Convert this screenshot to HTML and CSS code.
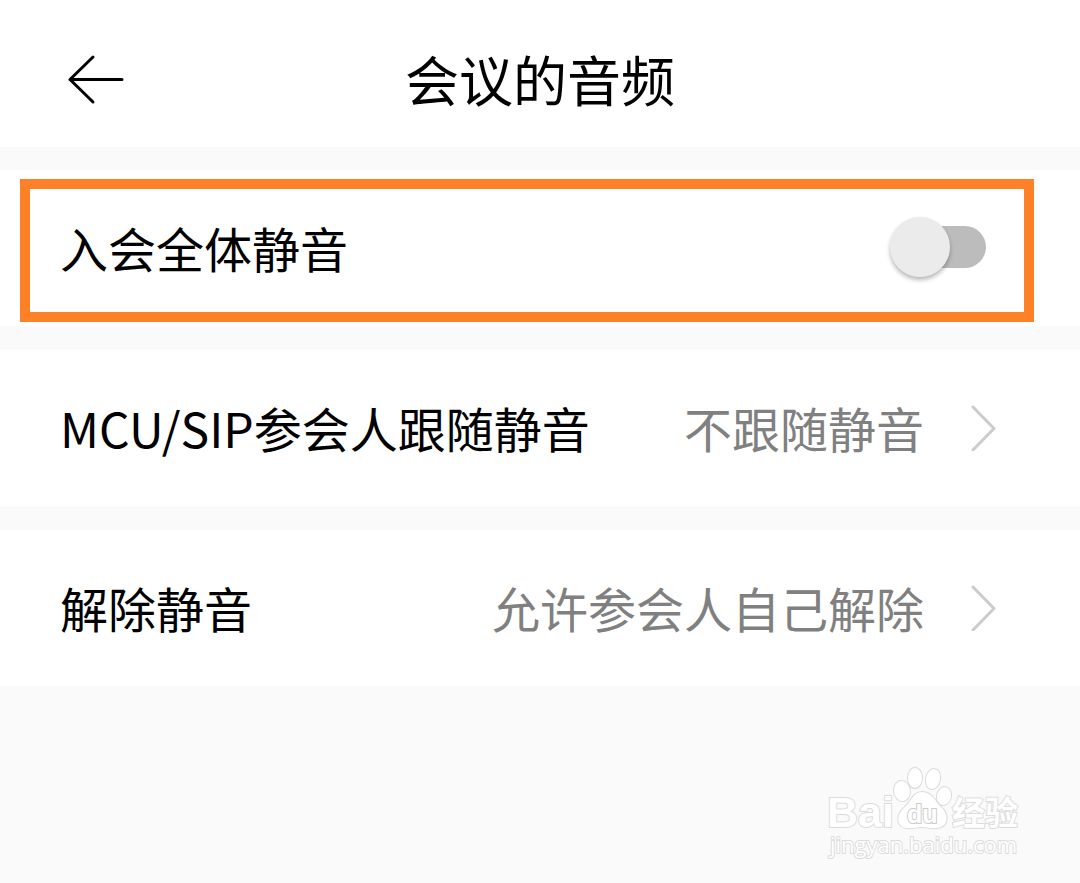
FILE: index.html
```html
<!DOCTYPE html>
<html lang="zh-CN">
<head>
<meta charset="utf-8">
<meta name="viewport" content="width=device-width, initial-scale=1">
<title>会议的音频</title>
<link rel="stylesheet" href="styles.css">
</head>
<body class="page">
<header class="header">
  <button class="back" type="button" aria-label="返回">
    <svg class="back-icon" width="60" height="52" viewBox="0 0 60 52" aria-hidden="true"><path d="M29 4 6 26.500 29 49M6 26.500H58"/></svg>
  </button>
  <h1 class="title">会议的音频</h1>
</header>
<main class="settings">
  <div class="row row-highlighted">
    <label class="label" for="mute-all">入会全体静音</label>
    <input class="switch" id="mute-all" type="checkbox" role="switch">
  </div>
  <button class="row" type="button">
    <span class="label">MCU/SIP参会人跟随静音</span>
    <span class="value">不跟随静音</span>
    <svg class="chevron" width="28" height="48" viewBox="0 0 28 48" aria-hidden="true"><path d="M3 4 24 25.500 3 47"/></svg>
  </button>
  <button class="row" type="button">
    <span class="label">解除静音</span>
    <span class="value">允许参会人自己解除</span>
    <svg class="chevron" width="28" height="48" viewBox="0 0 28 48" aria-hidden="true"><path d="M3 4 24 25.500 3 47"/></svg>
  </button>
</main>
<footer class="footer">
  <svg class="watermark" width="210" height="104" viewBox="0 0 210 104">
    <text class="mark mark-latin" x="7" y="68">Bai</text>
    <ellipse class="mark" cx="82" cy="32" rx="8" ry="10" transform="rotate(-8 82 32)"/>
    <ellipse class="mark" cx="95" cy="19" rx="7" ry="10"/>
    <ellipse class="mark" cx="113" cy="20" rx="7" ry="10" transform="rotate(12 113 20)"/>
    <ellipse class="mark" cx="124" cy="37" rx="7" ry="9" transform="rotate(12 124 37)"/>
    <path class="mark" d="M102 33C112 33 115 42 121 48C130 56 128 69 116 69C110 70 107 68 102 68C97 68 93 70 87 69C76 68 76 56 84 49C91 43 93 33 102 33Z"/>
    <text class="mark mark-du" x="87" y="64">du</text>
    <text class="mark mark-cjk" x="132" y="66">经验</text>
    <text class="mark mark-url" x="10" y="94">jingyan.baidu.com</text>
  </svg>
</footer>
</body>
</html>
```
FILE: styles.css
```css
* {
  box-sizing: border-box;
}

.page {
  display: flex;
  flex-direction: column;
  min-height: 100vh;
  margin: 0;
  background: #fafafa;
  color: #000;
  font-family: "Noto Sans CJK SC", sans-serif;
}

.header {
  display: grid;
  grid-template-columns: 64px 1fr 64px;
  align-items: center;
  padding: 39px 64px 28px;
  background: #fff;
}

.back {
  display: flex;
  padding: 0;
  border: 0;
  background: none;
}

.back-icon {
  fill: none;
  stroke: #000;
  stroke-width: 3;
  stroke-linecap: round;
  stroke-linejoin: round;
}

.title {
  margin: 0;
  font-size: 54px;
  font-weight: 400;
  line-height: 80px;
  text-align: center;
}

.settings {
  display: flex;
  flex-direction: column;
  gap: 24px;
  margin-top: 23px;
}

.row {
  position: relative;
  display: flex;
  align-items: center;
  width: 100%;
  padding: 41px 82px 43px 60px;
  border: 0;
  background: #fff;
  color: inherit;
  font: inherit;
  font-size: 48px;
  line-height: 72px;
  text-align: left;
}

.row-highlighted {
  padding-right: 94px;
}

.row-highlighted::after {
  content: "";
  position: absolute;
  inset: 9px 46px 4px 20px;
  border: 10px solid #ff8127;
  pointer-events: none;
}

.label {
  flex: 1;
}

.value {
  color: #808080;
}

.chevron {
  margin-left: 46px;
  fill: none;
  stroke: #ccc;
  stroke-width: 3;
  stroke-linecap: round;
  stroke-linejoin: round;
}

.switch {
  position: relative;
  appearance: none;
  width: 96px;
  height: 60px;
  margin: 0;
}

.switch::before {
  content: "";
  position: absolute;
  inset: 9px 0 9px 6px;
  border-radius: 21px;
  background: #bcbcbc;
}

.switch::after {
  content: "";
  position: absolute;
  top: 0;
  left: 0;
  width: 60px;
  height: 60px;
  border-radius: 50%;
  background: #ebebeb;
  box-shadow: 0 3px 4px rgba(0, 0, 0, 0.28);
}

.switch:checked::after {
  left: 36px;
}

.footer {
  display: flex;
  flex: 1;
  align-items: flex-end;
  justify-content: flex-end;
  padding: 40px 50px 20px;
}

.watermark {
  display: block;
}

.mark {
  fill: #fff;
  stroke: #dcdcdc;
  stroke-width: 2;
  paint-order: stroke;
}

.mark-latin {
  font: 700 43px "Liberation Sans", sans-serif;
}

.mark-du {
  stroke: #ccc;
  font: 700 25px "Liberation Sans", sans-serif;
}

.mark-cjk {
  font: 700 33px "Noto Sans CJK SC", sans-serif;
}

.mark-url {
  font: 400 22px "Open Sans", sans-serif;
}
```
